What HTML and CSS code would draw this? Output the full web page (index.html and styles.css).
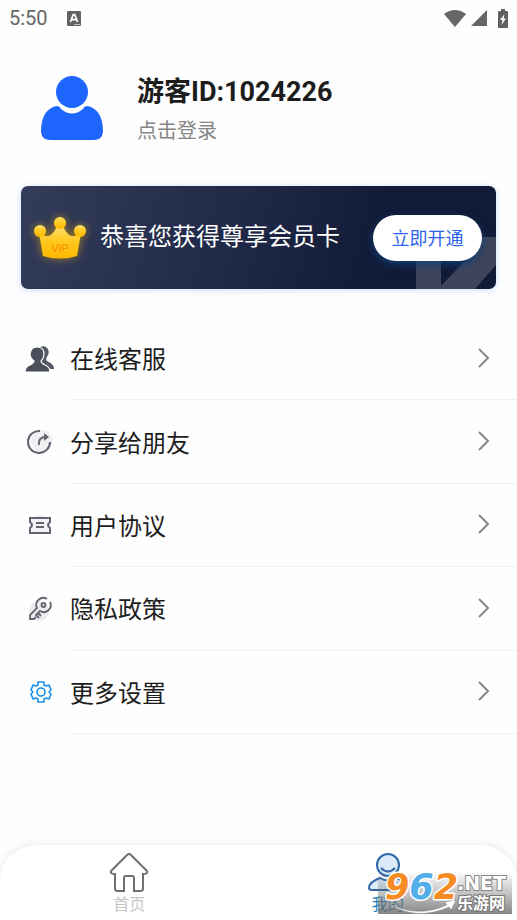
FILE: index.html
```html
<!DOCTYPE html>
<html lang="zh-CN">
<head>
<meta charset="utf-8">
<meta name="viewport" content="width=device-width, initial-scale=1">
<title>我的</title>
<link rel="stylesheet" href="styles.css">
</head>
<body>
<header class="status">
  <time class="status-time">5:50</time>
  <svg class="status-app" viewBox="0 0 14 15" aria-hidden="true"><rect width="14" height="15" rx="1" fill="#626262"/><path d="M3.5 11 6.2 3.5h1.6L10.500 11M4.800 8.600h4.400" fill="none" stroke="#fff" stroke-width="1.700"/><path d="M7 13.500h6" stroke="#bbb"/></svg>
  <span class="status-icons">
    <svg width="22" height="17" viewBox="0 0 22 17" aria-hidden="true"><path d="M0 4Q11-4 22 4L11 17Z" fill="#666"/></svg>
    <svg width="16" height="16" viewBox="0 0 16 16" aria-hidden="true"><path d="M16 0V16H0Z" fill="#666"/></svg>
    <svg class="battery" width="10" height="19" viewBox="0 0 10 19" aria-hidden="true"><path d="M3 0h4v2h2q1 0 1 1v15q0 1-1 1H1q-1 0-1-1V3q0-1 1-1h2Z" fill="#606060"/><path d="M6.500 5 2 11h2.500L3.500 16 8 9.500H5.500Z" fill="#fff"/></svg>
  </span>
</header>

<main class="page">
  <a class="profile" href="#login">
    <svg class="avatar" viewBox="0 0 64 66" aria-hidden="true"><circle cx="32" cy="17" r="16" fill="#1f66ff"/><path d="M16 31Q20 31 21 34Q32 43 43 34Q44 31 48 31Q63 35 63 57Q62 65 54 65H10Q2 65 1 57Q1 35 16 31Z" fill="#1f66ff"/></svg>
    <span class="profile-text">
      <strong class="profile-name">游客ID:1024226</strong>
      <span class="profile-hint">点击登录</span>
    </span>
  </a>

  <section class="vip">
    <svg class="vip-mark" viewBox="0 0 80 52" aria-hidden="true"><path d="M0 0H80V28L59 52H0ZM25 10V49L62 10Z" fill="#fff" fill-opacity=".19" fill-rule="evenodd"/></svg>
    <svg class="crown" viewBox="0 0 52 44" aria-hidden="true">
      <defs><linearGradient id="gold" x2="0" y2="1"><stop stop-color="#ffe071"/><stop offset=".5" stop-color="#ffc91b"/><stop offset="1" stop-color="#ffb700"/></linearGradient></defs>
      <g fill="url(#gold)"><path d="M5 17Q13 23 18 18Q22 14 23 9h6Q30 14 34 18Q39 23 47 17L43 40Q26 45 9 40Z"/><circle cx="26" cy="7" r="6"/><circle cx="6" cy="15" r="6"/><circle cx="46" cy="15" r="6"/></g>
      <text class="crown-text" x="26" y="36" text-anchor="middle">VIP</text>
    </svg>
    <h2 class="vip-title">恭喜您获得尊享会员卡</h2>
    <button class="vip-button" type="button">立即开通</button>
  </section>

  <nav class="menu" aria-label="功能">
    <a class="row" href="#service">
      <svg class="row-icon" viewBox="0 0 30 30" aria-hidden="true"><path d="M14 4Q17 1 21 3Q25 6 23 11Q20 15 22 17Q29 20 29 25H15L10 8Z" fill="#555966"/><path d="M12 3Q19 3 19 10Q19 14 16 17Q16 19 20 21Q25 23 25 28H0Q0 23 5 21Q9 19 9 17Q5 14 5 10Q6 3 12 3Z" fill="#4b4f5c" stroke="#fff" stroke-width="1.200"/></svg>
      <span class="row-body">在线客服<svg class="chevron" viewBox="0 0 12 20" aria-hidden="true"><path d="m1 1 9 9-9 9"/></svg></span>
    </a>
    <a class="row" href="#share">
      <svg class="row-icon" viewBox="0 0 30 30" aria-hidden="true"><circle cx="17" cy="14" r="11" fill="#f0f0f2"/><g fill="none" stroke="#626570" stroke-width="2"><path d="M15 4A11 11 0 1 0 25 15M14 18Q13 10 21 10"/></g><path d="m19 6 5 4-5 4Z" fill="#626570"/></svg>
      <span class="row-body">分享给朋友<svg class="chevron" viewBox="0 0 12 20" aria-hidden="true"><path d="m1 1 9 9-9 9"/></svg></span>
    </a>
    <a class="row" href="#terms">
      <svg class="row-icon" viewBox="0 0 30 30" aria-hidden="true"><circle cx="15" cy="15" r="10" fill="#f3f3f5"/><path d="M5 8H25V12Q21 15 25 18V23H5V18Q9 15 5 12ZM11 13h8M11 17h8" fill="none" stroke="#626570" stroke-width="2"/></svg>
      <span class="row-body">用户协议<svg class="chevron" viewBox="0 0 12 20" aria-hidden="true"><path d="m1 1 9 9-9 9"/></svg></span>
    </a>
    <a class="row" href="#privacy">
      <svg class="row-icon" viewBox="0 0 30 30" aria-hidden="true"><circle cx="14" cy="17" r="10" fill="#ececef"/><g fill="none" stroke="#626570" stroke-width="1.800"><path d="M22 5A7 7 0 0 0 12 14L5 21V25H9L11 23M25 8A7 7 0 0 1 15 17L11 21L14 24M13 19L16 22"/><circle cx="18.500" cy="11" r="2"/></g></svg>
      <span class="row-body">隐私政策<svg class="chevron" viewBox="0 0 12 20" aria-hidden="true"><path d="m1 1 9 9-9 9"/></svg></span>
    </a>
    <a class="row" href="#settings">
      <svg class="row-icon" viewBox="0 0 30 30" aria-hidden="true"><g fill="none" stroke="#1b8fe8" stroke-width="1.600" stroke-linejoin="round"><path d="M13 5h6v3l2 1 3-1 2 5-2 2 2 2-2 5-3-1-2 1v3h-6v-3l-2-1-3 1-2-5 2-2-2-2 2-5 3 1 2-1Z"/><circle cx="16" cy="15" r="4"/></g></svg>
      <span class="row-body">更多设置<svg class="chevron" viewBox="0 0 12 20" aria-hidden="true"><path d="m1 1 9 9-9 9"/></svg></span>
    </a>
  </nav>
</main>

<nav class="tabs" aria-label="主导航">
  <a class="tab" href="#home">
    <svg class="tab-icon" viewBox="0 0 40 40" aria-hidden="true"><path d="M18 2Q20 0 22 2L38 18Q39 21 34 21V36Q34 38 31 38H25V25Q25 23 23 23H17Q15 23 15 25V38H9Q6 38 6 36V21Q1 21 2 18Z" fill="none" stroke="#707070" stroke-width="2"/></svg>
    <span>首页</span>
  </a>
  <a class="tab tab-active" href="#mine" aria-current="page">
    <svg class="tab-icon" viewBox="0 0 40 40" aria-hidden="true"><g fill="none" stroke="#2e64a8" stroke-width="2"><circle cx="20" cy="12" r="11" fill="#dce9f8"/><path d="M13 15Q20 22 27 15"/><path d="M12 25Q1 29 1 35Q1 37 4 37H36Q39 37 39 34Q38 28 28 25Q20 30 12 25Z" fill="#dce9f8"/></g></svg>
    <span>我的</span>
  </a>
</nav>

<svg class="watermark" viewBox="0 0 134 43" role="img" aria-label="962.NET 乐游网">
  <defs><linearGradient id="shade" x2="0" y2="1"><stop stop-color="#777" stop-opacity="0"/><stop offset="1" stop-color="#666" stop-opacity=".8"/></linearGradient></defs>
  <rect width="134" height="43" fill="url(#shade)"/>
  <path d="M8 31Q38 48 69 34L67 31 78 29 73 39 71 36Q37 51 8 31Z" fill="#fff" stroke="#888" stroke-width=".5"/>
  <text class="mark-digits" x="7" y="28"><tspan fill="#f68b24">9</tspan><tspan fill="#51aee8">6</tspan><tspan fill="#f68b24">2</tspan></text>
  <text class="mark-net" x="79" y="19">.NET</text>
  <text class="mark-name" x="79" y="38">乐游网</text>
</svg>
</body>
</html>
```
FILE: styles.css
```css
* { box-sizing: border-box; }

body {
  margin: 0;
  min-height: 100vh;
  display: flex;
  flex-direction: column;
  position: relative;
  background: #fefefe;
  color: #1d1d1d;
  font-family: Roboto, "Noto Sans CJK SC", sans-serif;
}

a { color: inherit; text-decoration: none; }
svg { display: block; flex: none; }

.status {
  display: flex;
  align-items: center;
  height: 36px;
  padding: 0 9px;
  color: #666;
  font-size: 20px;
}
.status-app { width: 14px; height: 15px; margin-left: 19px; }
.status-icons { display: flex; align-items: center; gap: 5px; margin-left: auto; }
.battery { margin-left: 6px; }

.page { display: flex; flex-direction: column; }

.profile {
  display: flex;
  align-items: center;
  gap: 33px;
  height: 150px;
  padding: 0 40px 6px;
}
.avatar { width: 64px; height: 66px; }
.profile-text { display: flex; flex-direction: column; gap: 4px; padding-top: 2px; }
.profile-name { font-size: 27px; line-height: 40px; }
.profile-hint { color: #858585; font-size: 20px; line-height: 30px; }

.vip {
  position: relative;
  display: flex;
  align-items: center;
  height: 103px;
  margin: 0 21px;
  padding: 0 14px 0 13px;
  border-radius: 7px;
  background: linear-gradient(105deg, #343c5b, #202947 45%, #111b38 75%, #111a36);
  box-shadow: 0 1px 7px #c9dcfa;
}
.vip-mark { position: absolute; right: 0; bottom: 0; width: 80px; height: 52px; border-bottom-right-radius: 7px; }
.crown { width: 52px; height: 44px; filter: drop-shadow(0 0 4px #a98424); }
.crown-text { fill: #f68a08; font: 11px "Liberation Sans", sans-serif; }
.vip-title { margin: 0 auto 0 14px; color: #fff; font-size: 24px; font-weight: 400; line-height: 34px; padding-bottom: 2px; white-space: nowrap; }
.vip-button {
  position: relative;
  width: 109px;
  height: 46px;
  padding: 0 0 2px;
  border: 0;
  border-radius: 23px;
  background: #fff;
  box-shadow: 0 3px 8px #123f74;
  color: #2b63ee;
  font: inherit;
  font-size: 18px;
}

.menu { display: grid; grid-auto-rows: 1fr; min-height: 417px; margin-top: 28px; }
.row { display: flex; align-items: center; gap: 15px; padding-left: 25px; font-size: 24px; }
.row-icon { width: 30px; height: 30px; }
.row-body {
  display: flex;
  flex: 1;
  align-items: center;
  justify-content: space-between;
  height: 100%;
  padding: 0 27px 1px 0;
  border-bottom: 1px solid #eee;
}
.chevron { width: 12px; height: 20px; fill: none; stroke: #888; stroke-width: 2; }

.tabs {
  display: grid;
  grid-template-columns: 1fr 1fr;
  margin-top: auto;
  padding: 8px 0 3px;
  border-radius: 36px 36px 0 0;
  background: #fff;
  box-shadow: 0 -1px 8px #e9e9e9;
}
.tab { display: flex; flex-direction: column; align-items: center; color: #c4c4c4; font-size: 16px; line-height: 24px; }
.tab-active { color: #2682b8; }
.tab-icon { width: 40px; height: 40px; }

.watermark { position: absolute; right: 5px; bottom: 6px; width: 134px; height: 43px; overflow: visible; }
.mark-digits { font: italic 700 35px "DejaVu Sans", sans-serif; stroke: #fff; stroke-width: 3px; stroke-linejoin: round; paint-order: stroke; }
.mark-net { fill: #fff; stroke: #888; stroke-width: 2px; paint-order: stroke; font: 700 19px "DejaVu Sans", sans-serif; }
.mark-name { fill: #fff; stroke: #777; stroke-width: 2px; paint-order: stroke; font: 700 16px "Noto Sans CJK SC", sans-serif; }
```
